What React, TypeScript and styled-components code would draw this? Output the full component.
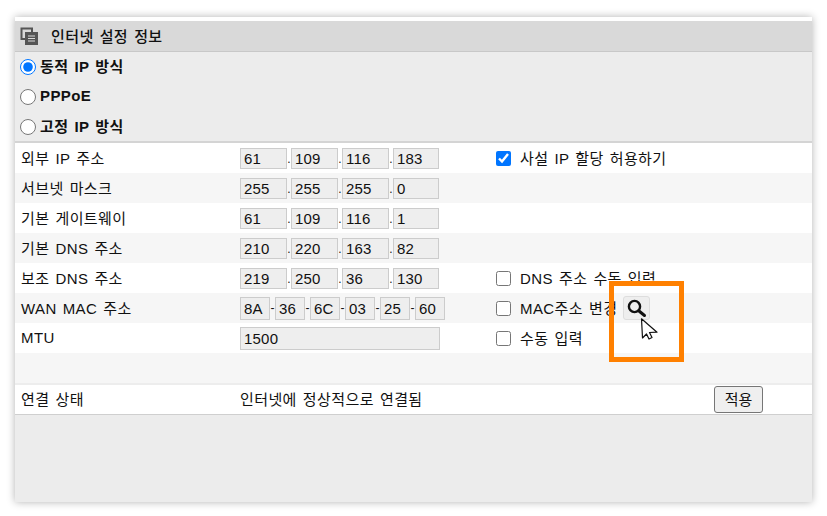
import React from "react";
import styled, { createGlobalStyle } from "styled-components";

const GlobalStyle = createGlobalStyle`
  html, body {
    margin: 0;
    background: #fff;
    font-family: "Liberation Sans", "Noto Sans CJK KR", sans-serif;
    font-size: 15px;
    letter-spacing: 0.4px;
    word-spacing: 1.5px;
    color: #111;
  }
`;

const Page = styled.div`
  position: relative;
  width: 827px;
  height: 516px;
  padding: 17px 15px 14px;
  box-sizing: border-box;
  overflow: hidden;
`;

const Panel = styled.div`
  height: 485px;
  background: #ececec;
  border-top: 4px solid #fff;
  box-sizing: border-box;
  box-shadow: 0 0 8px rgba(0, 0, 0, 0.3);
`;

const TitleBar = styled.div`
  height: 31px;
  box-sizing: border-box;
  display: flex;
  align-items: center;
  gap: 13px;
  padding-left: 5px;
  background: #d9d9d9;
  border-bottom: 1px solid #c8c8c8;
  font-size: 15px;
  font-weight: 500;
`;

const TitleText = styled.span`
  margin-bottom: 2px;
`;

const RadioList = styled.div`
  height: 89px;
  display: flex;
  flex-direction: column;
  border-bottom: 2px solid #d4d4d4;
`;

const RadioRow = styled.label`
  flex: 1;
  display: flex;
  align-items: center;
  gap: 4px;
  padding-left: 5px;
  font-weight: bold;
  font-size: 15px;
`;

const RadioText = styled.span`
  margin-bottom: 2px;
`;

const Radio = styled.input.attrs({ type: "radio" })`
  width: 16px;
  height: 16px;
  margin: 1px 0 0 0;
`;

const Row = styled.div<{ $alt?: boolean }>`
  height: 30px;
  display: grid;
  grid-template-columns: 219px 256px 1fr;
  align-items: center;
  padding-left: 6px;
  background: ${(p) => (p.$alt ? "#f6f6f6" : "#fff")};
`;

const RowLabel = styled.span<{ $lift?: number }>`
  margin-bottom: ${(p) => p.$lift ?? 2}px;
`;

const Fields = styled.div`
  display: flex;
  align-items: center;
`;

const Field = styled.div<{ $w: number; $tall?: boolean }>`
  width: ${(p) => p.$w}px;
  height: ${(p) => (p.$tall ? 23 : 21)}px;
  box-sizing: border-box;
  padding-left: 3px;
  line-height: ${(p) => (p.$tall ? 21 : 19)}px;
  background: #eee;
  border: 1px solid #ccc;
  font-size: 15px;
  letter-spacing: 0.2px;
`;

const Sep = styled.span<{ $w: number; $low?: boolean }>`
  width: ${(p) => p.$w}px;
  text-align: center;
  font-size: 12px;
  letter-spacing: 0;
  line-height: 21px;
  padding-top: ${(p) => (p.$low ? 3 : 0)}px;
`;

const CheckLabel = styled.label`
  display: flex;
  align-items: center;
  gap: 9px;
`;

const Check = styled.input.attrs({ type: "checkbox" })`
  width: 15px;
  height: 15px;
  margin: 0;
`;

const CheckText = styled.span`
  margin-bottom: 2px;
  white-space: nowrap;
`;

const MacLabelText = styled(CheckText)`
  width: 94px;
`;

const SearchButton = styled.button`
  width: 27px;
  height: 24px;
  padding: 0;
  display: flex;
  align-items: center;
  justify-content: center;
  background: #eee;
  border: 1px solid #ddd;
  border-radius: 3px;
`;

const StatusRow = styled(Row)`
  border-top: 2px solid #ededed;
  border-bottom: 1px solid #cfcfcf;
  box-sizing: content-box;
  height: 29px;
  grid-template-columns: 219px 474px 1fr;
`;

const ApplyButton = styled.button`
  width: 49px;
  height: 27px;
  padding: 0 0 2px;
  background: #efefef;
  border: 1px solid #767676;
  border-radius: 3px;
  font: inherit;
  color: #111;
`;

const Highlight = styled.div`
  position: absolute;
  left: 609px;
  top: 281px;
  width: 75px;
  height: 81px;
  box-sizing: border-box;
  border: 5px solid #ff8000;
  pointer-events: none;
`;

const Cursor = styled.svg`
  position: absolute;
  left: 640px;
  top: 318px;
`;

function Octets({ values }: { values: string[] }) {
  const widths = [47, 47, 47, 46];
  return (
    <Fields>
      {values.map((v, i) => (
        <React.Fragment key={i}>
          {i > 0 && <Sep $w={4} $low>.</Sep>}
          <Field $w={widths[i]}>{v}</Field>
        </React.Fragment>
      ))}
    </Fields>
  );
}

function MacFields({ values }: { values: string[] }) {
  return (
    <Fields>
      {values.map((v, i) => (
        <React.Fragment key={i}>
          {i > 0 && <Sep $w={5}>-</Sep>}
          <Field $w={30} $tall>{v}</Field>
        </React.Fragment>
      ))}
    </Fields>
  );
}

export default function App() {
  return (
    <Page>
      <GlobalStyle />
      <Panel>
        <TitleBar>
          <svg width="18" height="18" viewBox="0 0 18 18">
            <path d="M12 5V1.5H1.5V12H5" fill="none" stroke="#555" strokeWidth="2" />
            <rect x="5" y="5" width="13" height="13" fill="#555" />
            <path d="M8 9h7M8 11.5h7M8 14h7" stroke="#d9d9d9" strokeWidth="1" />
          </svg>
          <TitleText>인터넷 설정 정보</TitleText>
        </TitleBar>
        <RadioList>
          <RadioRow><Radio name="wan" defaultChecked /><RadioText>동적 IP 방식</RadioText></RadioRow>
          <RadioRow><Radio name="wan" /><RadioText>PPPoE</RadioText></RadioRow>
          <RadioRow><Radio name="wan" /><RadioText>고정 IP 방식</RadioText></RadioRow>
        </RadioList>
        <Row>
          <RowLabel>외부 IP 주소</RowLabel>
          <Octets values={["61", "109", "116", "183"]} />
          <CheckLabel><Check defaultChecked /><CheckText>사설 IP 할당 허용하기</CheckText></CheckLabel>
        </Row>
        <Row $alt>
          <RowLabel>서브넷 마스크</RowLabel>
          <Octets values={["255", "255", "255", "0"]} />
        </Row>
        <Row>
          <RowLabel>기본 게이트웨이</RowLabel>
          <Octets values={["61", "109", "116", "1"]} />
        </Row>
        <Row $alt>
          <RowLabel>기본 DNS 주소</RowLabel>
          <Octets values={["210", "220", "163", "82"]} />
        </Row>
        <Row>
          <RowLabel>보조 DNS 주소</RowLabel>
          <Octets values={["219", "250", "36", "130"]} />
          <CheckLabel><Check /><CheckText>DNS 주소 수동 입력</CheckText></CheckLabel>
        </Row>
        <Row $alt>
          <RowLabel>WAN MAC 주소</RowLabel>
          <MacFields values={["8A", "36", "6C", "03", "25", "60"]} />
          <CheckLabel>
            <Check />
            <MacLabelText>MAC주소 변경</MacLabelText>
            <SearchButton>
              <svg width="20" height="20" viewBox="0 0 20 20">
                <circle cx="7.5" cy="8.5" r="5.6" fill="none" stroke="#111" strokeWidth="2.4" />
                <path d="M12 13l5.5 4.5" stroke="#111" strokeWidth="3" strokeLinecap="round" />
              </svg>
            </SearchButton>
          </CheckLabel>
        </Row>
        <Row>
          <RowLabel>MTU</RowLabel>
          <Fields><Field $w={200} $tall>1500</Field></Fields>
          <CheckLabel><Check /><CheckText>수동 입력</CheckText></CheckLabel>
        </Row>
        <Row $alt />
        <StatusRow>
          <RowLabel $lift={3}>연결 상태</RowLabel>
          <RowLabel $lift={3}>인터넷에 정상적으로 연결됨</RowLabel>
          <ApplyButton>적용</ApplyButton>
        </StatusRow>
      </Panel>
      <Highlight />
      <Cursor width="19" height="22" viewBox="0 0 19 22">
        <path d="M1.5 .8L2.5 20l4-4 2.5 5 3-1.5-2.5-5 7.5-.3z" fill="#fff" stroke="#111" strokeWidth="1.2" strokeLinejoin="round" />
      </Cursor>
    </Page>
  );
}
